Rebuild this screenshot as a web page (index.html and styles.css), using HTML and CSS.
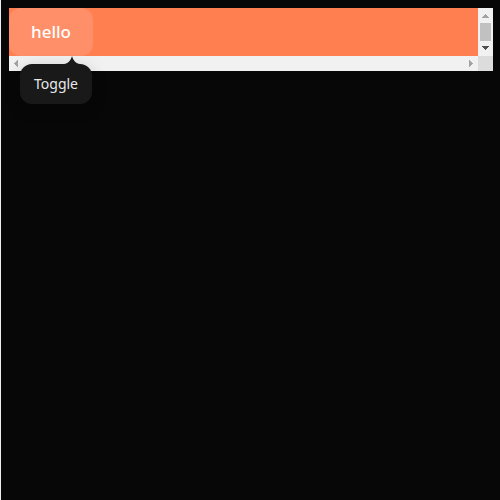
FILE: index.html
```html
<!DOCTYPE html>
<html lang="en">
<head>
<meta charset="utf-8">
<title>Toggle popover</title>
<link rel="stylesheet" href="styles.css">
</head>
<body>
<div class="scroller">
  <div class="viewport">
    <button class="trigger" type="button" aria-describedby="tip">hello</button>
  </div>
  <div class="bar vertical" aria-hidden="true">
    <svg class="step" width="7" height="4" viewBox="0 0 7 4" shape-rendering="crispEdges"><path d="M3 0h1v1h1v1h1v1h1v1H0V3h1V2h1V1h1z"/></svg>
    <span class="thumb"></span>
    <svg class="step active" width="7" height="4" viewBox="0 0 7 4" shape-rendering="crispEdges"><path d="M0 0h7v1H6v1H5v1H4v1H3V3H2V2H1V1H0z"/></svg>
  </div>
  <div class="bar horizontal" aria-hidden="true">
    <svg class="step" width="4" height="7" viewBox="0 0 4 7" shape-rendering="crispEdges"><path d="M3 0h1v7H3V6H2V5H1V4H0V3h1V2h1V1h1z"/></svg>
    <svg class="step" width="4" height="7" viewBox="0 0 4 7" shape-rendering="crispEdges"><path d="M0 0h1v1h1v1h1v1h1v1H3v1H2v1H1v1H0z"/></svg>
  </div>
  <div class="corner" aria-hidden="true"></div>
</div>
<div class="tooltip" id="tip" role="tooltip">
  <svg class="arrow" width="16" height="8" viewBox="0 0 16 8" aria-hidden="true"><path d="M0 8C4 8 7 4 8 0C9 4 12 8 16 8Z"/></svg>
  Toggle
</div>
</body>
</html>
```
FILE: styles.css
```css
html {
  box-sizing: border-box;
  min-height: 100vh;
  border-left: 1px solid #eee;
  background: #070707;
}
body {
  margin: 0;
  padding: 8px 7px 8px 8px;
  color: #e8e8e8;
  font-family: "Noto Sans", sans-serif;
}
.scroller {
  display: grid;
  grid-template: 48px 15px / 1fr 15px;
}
.viewport {
  overflow: hidden;
  background: coral;
}
.trigger {
  display: block;
  height: 48px;
  padding: 0 22px;
  border: 0;
  border-radius: 12px;
  background: #ff8f68;
  color: #fff;
  font: 500 17px/24px "Noto Sans", sans-serif;
}
.bar {
  display: flex;
  align-items: center;
  justify-content: space-between;
  background: #f1f1f1;
}
.vertical {
  flex-direction: column;
  padding: 6px 0;
  box-sizing: border-box;
}
.horizontal {
  padding: 0 5px;
}
.step {
  fill: #a3a3a3;
}
.active {
  fill: #505050;
}
.thumb {
  width: 11px;
  height: 18px;
  background: #c1c1c1;
}
.corner {
  background: #dcdcdc;
}
.tooltip {
  position: absolute;
  top: 64px;
  left: 20px;
  padding: 8px 14px;
  border-radius: 12px;
  background: #191919;
  box-shadow: 0 4px 16px rgb(0 0 0 / 20%);
  font-size: 14px;
  line-height: 24px;
}
.arrow {
  position: absolute;
  right: 12px;
  bottom: 100%;
  fill: #191919;
}
```
